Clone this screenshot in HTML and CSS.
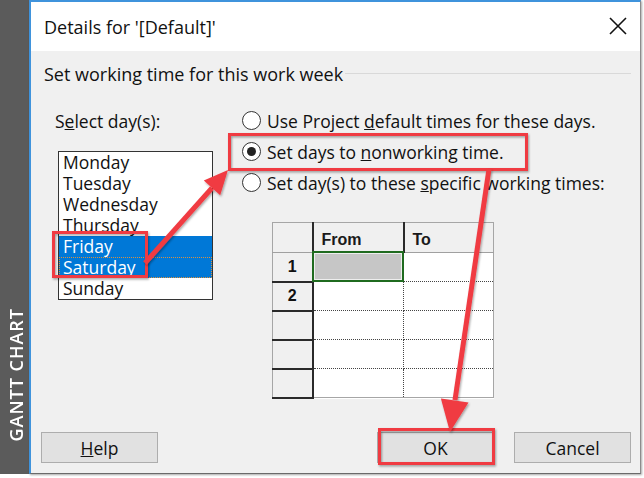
FILE: index.html
```html
<!DOCTYPE html>
<html>
<head>
<meta charset="utf-8">
<link rel="stylesheet" href="styles.css">
</head>
<body>
<div class="screen">
  <aside class="sidebar"><span class="sidebar-label">GANTT CHART</span></aside>
  <section class="dialog">
    <header class="titlebar">
      <span class="title">Details for '[Default]'</span>
      <svg class="close" width="18" height="18" viewBox="0 0 18 18"><path d="M1 1 L17 17 M17 1 L1 17" stroke="#111" stroke-width="1.6" fill="none"/></svg>
    </header>
    <div class="content">
      <div class="group-head"><span class="group-title">Set working time for this work week</span><span class="rule"></span></div>
      <div class="columns">
        <div class="days">
          <div class="label">S<u>e</u>lect day(s):</div>
          <ul class="listbox">
            <li class="item">Monday</li>
            <li class="item">Tuesday</li>
            <li class="item">Wednesday</li>
            <li class="item">Thursday</li>
            <li class="item selected">Friday</li>
            <li class="item selected focused">Saturday</li>
            <li class="item">Sunday</li>
          </ul>
        </div>
        <div class="options">
          <div class="radio"><span class="circle"></span><span>Use Project <u>d</u>efault times for these days.</span></div>
          <div class="radio"><span class="circle checked"></span><span>Set days to <u>n</u>onworking time.</span></div>
          <div class="radio"><span class="circle"></span><span>Set day(s) to these <u>s</u>pecific working times:</span></div>
          <table class="times">
            <tr class="head"><th class="corner"></th><th class="col-from">From</th><th class="col-to">To</th></tr>
            <tr><th class="rowhead">1</th><td class="active"><span class="active-fill"></span></td><td></td></tr>
            <tr><th class="rowhead">2</th><td></td><td></td></tr>
            <tr><th class="rowhead"></th><td></td><td></td></tr>
            <tr><th class="rowhead"></th><td></td><td></td></tr>
            <tr class="last"><th class="rowhead"></th><td></td><td></td></tr>
          </table>
        </div>
      </div>
      <div class="buttons">
        <button class="btn"><u>H</u>elp</button>
        <button class="btn btn-ok">OK</button>
        <button class="btn">Cancel</button>
      </div>
    </div>
  </section>
  <svg class="annotations" width="644" height="478" viewBox="0 0 644 478">
    <defs>
      <filter id="sh" x="-20%" y="-20%" width="140%" height="140%">
        <feDropShadow dx="1" dy="1.5" stdDeviation="1.2" flood-color="#000" flood-opacity="0.35"/>
      </filter>
    </defs>
    <g filter="url(#sh)" fill="none" stroke="#f03b42" stroke-width="3">
      <rect x="53.5" y="232.5" width="93" height="44"/>
      <rect x="229.5" y="134.5" width="297" height="35"/>
      <rect x="379.5" y="429.5" width="114" height="34"/>
    </g>
    <g filter="url(#sh)">
      <line x1="145" y1="263" x2="212" y2="188" stroke="#f03b42" stroke-width="5"/>
      <polygon points="228,170 220.2,195.2 203.8,180.6" fill="#f03b42"/>
      <line x1="489" y1="169" x2="455" y2="400" stroke="#f03b42" stroke-width="5"/>
      <polygon points="450,432 468.5,402.4 440.9,398.4" fill="#f03b42"/>
    </g>
  </svg>
</div>
</body>
</html>
```

FILE: styles.css
```css
* { box-sizing: border-box; }
html, body { margin: 0; padding: 0; background: #ffffff; }
body { font-family: "Open Sans", "Noto Sans", sans-serif; color: #111; }

.screen {
  position: relative;
  width: 644px;
  height: 478px;
  display: flex;
  align-items: flex-start;
}

.sidebar {
  width: 29px;
  height: 474px;
  background: #5b5b5b;
  display: flex;
  flex-direction: column;
  justify-content: flex-end;
  align-items: center;
  padding-bottom: 32px;
}
.sidebar-label {
  writing-mode: vertical-rl;
  transform: rotate(180deg);
  color: #fff;
  font-size: 18px;
  font-weight: 600;
  letter-spacing: 1px;
  line-height: 18px;
  margin-left: 2px;
}

.dialog {
  width: 612px;
  height: 474px;
  display: flex;
  flex-direction: column;
  border-left: 2px solid #3f93dc;
  border-top: 2px solid #3f93dc;
  border-right: 1px solid #8c8c8c;
  border-bottom: 1px solid #6a6a6a;
  box-shadow: 1px 1px 2px rgba(0,0,0,0.35);
}

.titlebar {
  height: 49px;
  background: #fff;
  display: flex;
  align-items: center;
  padding: 0 13px 0 13px;
}
.title { font-size: 18px; flex: 1; }
.close { display: block; margin-top: -2px; }

.content {
  flex: 1;
  background: #f0f0f0;
  display: flex;
  flex-direction: column;
  padding: 12px 9px 10px 13px;
  font-size: 17.5px;
}

.group-head {
  display: flex;
  align-items: center;
  height: 22px;
}
.group-title { white-space: nowrap; font-size: 18px; }
.rule { flex: 1; height: 1px; background: #d9d9d9; margin-left: 2px; margin-top: -2px; }

.columns {
  display: flex;
  margin-top: 20px;
}
.days { width: 158px; margin-left: 11px; }
.label { line-height: 21px; padding-top: 6px; }
.listbox {
  list-style: none;
  margin: 19px 0 0 3px;
  padding: 0;
  width: 155px;
  height: 149px;
  background: #fff;
  border: 1px solid #333;
  overflow: hidden;
}
.item { height: 21px; line-height: 21px; padding-left: 4px; white-space: nowrap; }
.item.selected { background: #0078d7; color: #fff; }
.item.focused { outline: 1px dotted #d9903f; outline-offset: -1px; }

.options { margin-left: 29px; }
.radio { display: flex; align-items: center; height: 31px; white-space: nowrap; }
.circle {
  width: 19px; height: 19px;
  border: 1px solid #333;
  border-radius: 50%;
  background: #fff;
  margin: 0 6px 0 0;
  display: flex; align-items: center; justify-content: center;
  flex: none;
}
.circle.checked::after {
  content: "";
  width: 9px; height: 9px; border-radius: 50%; background: #222;
}

.times {
  margin: 24px 0 0 30px;
  border-collapse: collapse;
  font-family: "Liberation Sans", Arial, sans-serif;
  font-size: 16px;
  border: 1px solid #a6a6a6;
  background: #fff;
}
.times th, .times td { padding: 0; }
.times .head th {
  height: 30px;
  background: #f0f0f0;
  text-align: left;
  vertical-align: bottom;
  padding: 0 0 3px 8px;
  font-weight: bold;
  color: #1a1a1a;
  border-bottom: 1px solid #a0a0a0;
}
.times .corner { width: 40px; border-right: 2px solid #2a2a2a; }
.times .col-from { width: 91px; border-right: 2px solid #2a2a2a; }
.times .col-to { width: 90px; }
.times tr { height: 29px; }
.times .rowhead {
  background: #f0f0f0;
  text-align: center;
  font-weight: bold;
  border-right: 2px solid #2a2a2a;
  border-bottom: 2px solid #2a2a2a;
}
.times td { border-bottom: 1px dotted #444; border-right: 1px dotted #444; }
.times td:last-child { border-right: none; }
.times tr.last td { border-bottom: none; }
.times td.active { position: relative; }
.active-fill {
  position: absolute; left: -2px; top: -2px; right: -1px; bottom: -1px;
  border: 2px solid #1f6b1f;
  background: #c6c6c6;
  box-shadow: inset 0 0 0 1px #eee;
}

.buttons {
  margin-top: auto;
  display: flex;
  gap: 20px;
  margin-left: -3px;
}
.btn {
  width: 117px;
  height: 31px;
  background: #e1e1e1;
  border: 1px solid #adadad;
  font-family: "Open Sans", "Noto Sans", sans-serif;
  font-size: 17.5px;
  color: #111;
  padding: 0;
}
.btn-ok { margin-left: auto; }

.annotations { position: absolute; left: 0; top: 0; pointer-events: none; }
```
